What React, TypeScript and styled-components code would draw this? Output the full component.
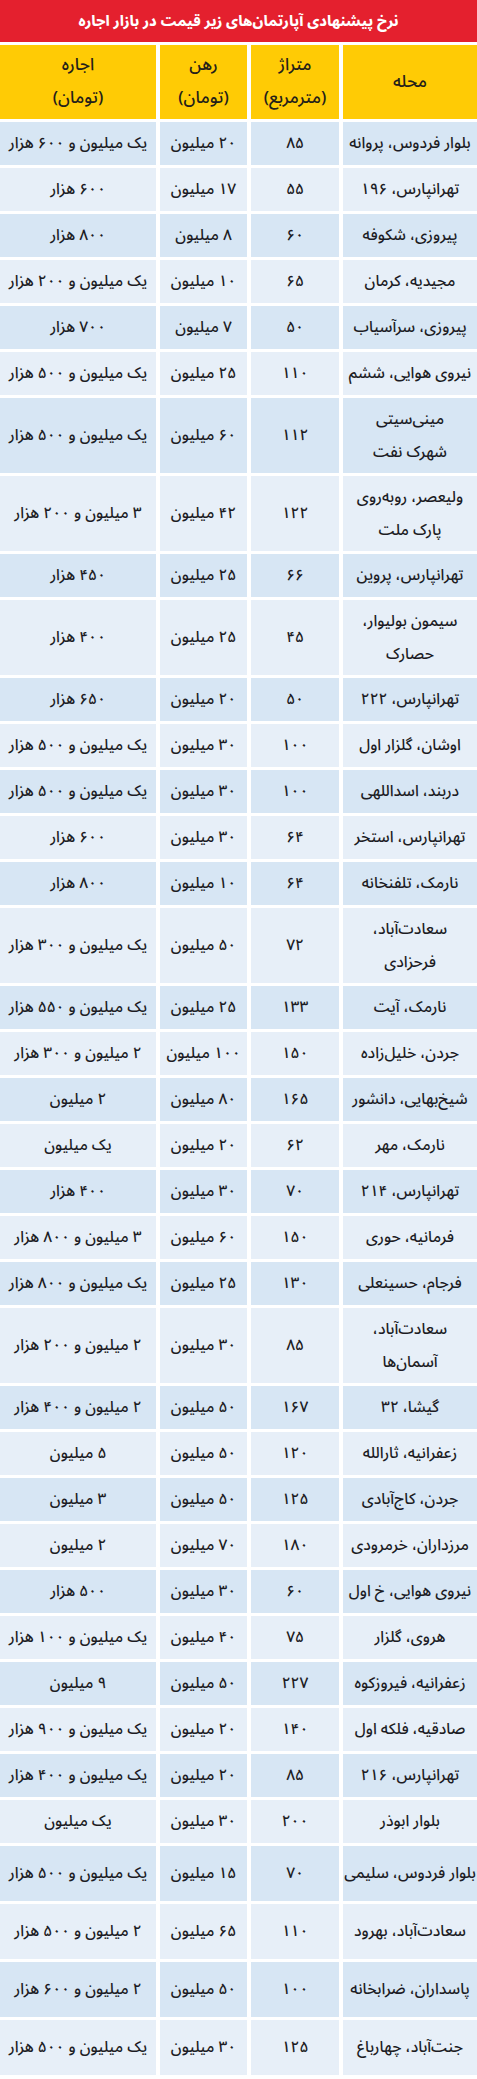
import React from "react";
import styled, { createGlobalStyle } from "styled-components";

const GlobalStyle = createGlobalStyle`
  html, body { margin: 0; padding: 0; background: #ffffff; }
  body { font-family: "Noto Sans Arabic", "DejaVu Sans", sans-serif; }
`;

type Size = "single" | "double" | "tall";

const rowHeights: Record<Size, number> = { single: 43, double: 75, tall: 55 };

const Page = styled.div`
  width: 477px;
  direction: rtl;
  display: flex;
  flex-direction: column;
  gap: 3px;
  font-family: "Noto Sans Arabic", "DejaVu Sans", sans-serif;
  color: #1c1c24;
`;

const Title = styled.h1`
  margin: 0;
  height: 42px;
  background: #e4202e;
  color: #ffffff;
  font-size: 14.5px;
  font-weight: 800;
  display: flex;
  align-items: center;
  justify-content: center;
  letter-spacing: -0.2px;
`;

const Grid = styled.div<{ $size: Size }>`
  display: grid;
  grid-template-columns: 134px 88px 87px 1fr;
  column-gap: 4px;
  height: ${(p) => rowHeights[p.$size]}px;
`;

const HeaderRow = styled(Grid)`
  height: 74px;
`;

const HeaderCell = styled.div`
  background: #ffcb05;
  display: flex;
  align-items: center;
  justify-content: center;
  text-align: center;
  font-size: 17px;
  font-weight: 500;
  line-height: 33px;
  color: #23201a;
`;

const Body = styled.div`
  display: flex;
  flex-direction: column;
  gap: 3px;
`;

const Cell = styled.div<{ $dark: boolean }>`
  background: ${(p) => (p.$dark ? "#d7e6f4" : "#e7eff8")};
  display: flex;
  align-items: center;
  justify-content: center;
  text-align: center;
  font-size: 15.5px;
  font-weight: 500;
  line-height: 33px;
  white-space: nowrap;
  letter-spacing: -0.3px;
`;

type Row = { n: string; a: string; r: string; e: string; s?: Size };

const rows: Row[] = [
  { n: "بلوار فردوس، پروانه", a: "۸۵", r: "۲۰ میلیون", e: "یک میلیون و ۶۰۰ هزار" },
  { n: "تهرانپارس، ۱۹۶", a: "۵۵", r: "۱۷ میلیون", e: "۶۰۰ هزار" },
  { n: "پیروزی، شکوفه", a: "۶۰", r: "۸ میلیون", e: "۸۰۰ هزار" },
  { n: "مجیدیه، کرمان", a: "۶۵", r: "۱۰ میلیون", e: "یک میلیون و ۲۰۰ هزار" },
  { n: "پیروزی، سرآسیاب", a: "۵۰", r: "۷ میلیون", e: "۷۰۰ هزار" },
  { n: "نیروی هوایی، ششم", a: "۱۱۰", r: "۲۵ میلیون", e: "یک میلیون و ۵۰۰ هزار" },
  { n: "مینی‌سیتی\nشهرک نفت", a: "۱۱۲", r: "۶۰ میلیون", e: "یک میلیون و ۵۰۰ هزار", s: "double" },
  { n: "ولیعصر، روبه‌روی\nپارک ملت", a: "۱۲۲", r: "۴۲ میلیون", e: "۳ میلیون و ۲۰۰ هزار", s: "double" },
  { n: "تهرانپارس، پروین", a: "۶۶", r: "۲۵ میلیون", e: "۴۵۰ هزار" },
  { n: "سیمون بولیوار،\nحصارک", a: "۴۵", r: "۲۵ میلیون", e: "۴۰۰ هزار", s: "double" },
  { n: "تهرانپارس، ۲۲۲", a: "۵۰", r: "۲۰ میلیون", e: "۶۵۰ هزار" },
  { n: "اوشان، گلزار اول", a: "۱۰۰", r: "۳۰ میلیون", e: "یک میلیون و ۵۰۰ هزار" },
  { n: "دربند، اسداللهی", a: "۱۰۰", r: "۳۰ میلیون", e: "یک میلیون و ۵۰۰ هزار" },
  { n: "تهرانپارس، استخر", a: "۶۴", r: "۳۰ میلیون", e: "۶۰۰ هزار" },
  { n: "نارمک، تلفنخانه", a: "۶۴", r: "۱۰ میلیون", e: "۸۰۰ هزار" },
  { n: "سعادت‌آباد،\nفرحزادی", a: "۷۲", r: "۵۰ میلیون", e: "یک میلیون و ۳۰۰ هزار", s: "double" },
  { n: "نارمک، آیت", a: "۱۳۳", r: "۲۵ میلیون", e: "یک میلیون و ۵۵۰ هزار" },
  { n: "جردن، خلیل‌زاده", a: "۱۵۰", r: "۱۰۰ میلیون", e: "۲ میلیون و ۳۰۰ هزار" },
  { n: "شیخ‌بهایی، دانشور", a: "۱۶۵", r: "۸۰ میلیون", e: "۲ میلیون" },
  { n: "نارمک، مهر", a: "۶۲", r: "۲۰ میلیون", e: "یک میلیون" },
  { n: "تهرانپارس، ۲۱۴", a: "۷۰", r: "۳۰ میلیون", e: "۴۰۰ هزار" },
  { n: "فرمانیه، حوری", a: "۱۵۰", r: "۶۰ میلیون", e: "۳ میلیون و ۸۰۰ هزار" },
  { n: "فرجام، حسینعلی", a: "۱۳۰", r: "۲۵ میلیون", e: "یک میلیون و ۸۰۰ هزار" },
  { n: "سعادت‌آباد،\nآسمان‌ها", a: "۸۵", r: "۳۰ میلیون", e: "۲ میلیون و ۲۰۰ هزار", s: "double" },
  { n: "گیشا، ۳۲", a: "۱۶۷", r: "۵۰ میلیون", e: "۲ میلیون و ۴۰۰ هزار" },
  { n: "زعفرانیه، ثارالله", a: "۱۲۰", r: "۵۰ میلیون", e: "۵ میلیون" },
  { n: "جردن، کاج‌آبادی", a: "۱۲۵", r: "۵۰ میلیون", e: "۳ میلیون" },
  { n: "مرزداران، خرمرودی", a: "۱۸۰", r: "۷۰ میلیون", e: "۲ میلیون" },
  { n: "نیروی هوایی، خ اول", a: "۶۰", r: "۳۰ میلیون", e: "۵۰۰ هزار" },
  { n: "هروی، گلزار", a: "۷۵", r: "۴۰ میلیون", e: "یک میلیون و ۱۰۰ هزار" },
  { n: "زعفرانیه، فیروزکوه", a: "۲۲۷", r: "۵۰ میلیون", e: "۹ میلیون" },
  { n: "صادقیه، فلکه اول", a: "۱۴۰", r: "۲۰ میلیون", e: "یک میلیون و ۹۰۰ هزار" },
  { n: "تهرانپارس، ۲۱۶", a: "۸۵", r: "۲۰ میلیون", e: "یک میلیون و ۴۰۰ هزار" },
  { n: "بلوار ابوذر", a: "۲۰۰", r: "۳۰ میلیون", e: "یک میلیون" },
  { n: "بلوار فردوس، سلیمی", a: "۷۰", r: "۱۵ میلیون", e: "یک میلیون و ۵۰۰ هزار", s: "tall" },
  { n: "سعادت‌آباد، بهرود", a: "۱۱۰", r: "۶۵ میلیون", e: "۲ میلیون و ۵۰۰ هزار", s: "tall" },
  { n: "پاسداران، ضرابخانه", a: "۱۰۰", r: "۵۰ میلیون", e: "۲ میلیون و ۶۰۰ هزار", s: "tall" },
  { n: "جنت‌آباد، چهارباغ", a: "۱۲۵", r: "۳۰ میلیون", e: "یک میلیون و ۵۰۰ هزار", s: "tall" },
];

const Lines: React.FC<{ text: string }> = ({ text }) => (
  <span>
    {text.split("\n").map((l, i) => (
      <React.Fragment key={i}>
        {i > 0 && <br />}
        {l}
      </React.Fragment>
    ))}
  </span>
);

export default function App() {
  return (
    <>
      <GlobalStyle />
      <Page>
        <Title>نرخ پیشنهادی آپارتمان‌های زیر قیمت در بازار اجاره</Title>
        <HeaderRow $size="double">
          <HeaderCell>محله</HeaderCell>
          <HeaderCell>
            <Lines text={"متراژ\n(مترمربع)"} />
          </HeaderCell>
          <HeaderCell>
            <Lines text={"رهن\n(تومان)"} />
          </HeaderCell>
          <HeaderCell>
            <Lines text={"اجاره\n(تومان)"} />
          </HeaderCell>
        </HeaderRow>
        <Body>
          {rows.map((row, i) => {
            const dark = i % 2 === 0;
            return (
              <Grid key={i} $size={row.s ?? "single"}>
                <Cell $dark={dark}>
                  <Lines text={row.n} />
                </Cell>
                <Cell $dark={dark}>{row.a}</Cell>
                <Cell $dark={dark}>{row.r}</Cell>
                <Cell $dark={dark}>{row.e}</Cell>
              </Grid>
            );
          })}
        </Body>
      </Page>
    </>
  );
}
